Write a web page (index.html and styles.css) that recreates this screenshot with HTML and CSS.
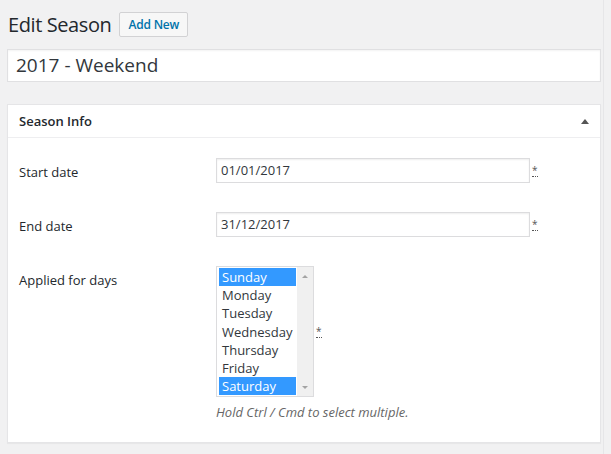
FILE: index.html
```html
<!DOCTYPE html>
<html>
<head>
<meta charset="utf-8">
<link rel="stylesheet" href="styles.css">
</head>
<body>
<div class="wrap">
  <div class="head">
    <h1 class="title">Edit Season</h1>
    <a class="add-new">Add New</a>
  </div>
  <div class="title-input">2017 - Weekend</div>
  <div class="postbox">
    <div class="postbox-head">
      <span class="postbox-title">Season Info</span>
      <span class="toggle"></span>
    </div>
    <div class="postbox-body">
      <div class="row">
        <div class="label">Start date</div>
        <div class="field">
          <div class="text-input">01/01/2017</div>
          <abbr class="req" title="required">*</abbr>
        </div>
      </div>
      <div class="row">
        <div class="label">End date</div>
        <div class="field">
          <div class="text-input">31/12/2017</div>
          <abbr class="req" title="required">*</abbr>
        </div>
      </div>
      <div class="row">
        <div class="label">Applied for days</div>
        <div class="field-col">
          <div class="field">
            <div class="listbox">
              <div class="options">
                <div class="option selected">Sunday</div>
                <div class="option">Monday</div>
                <div class="option">Tuesday</div>
                <div class="option">Wednesday</div>
                <div class="option">Thursday</div>
                <div class="option">Friday</div>
                <div class="option selected">Saturday</div>
              </div>
              <div class="scrollbar">
                <span class="arrow up"></span>
                <span class="arrow down"></span>
              </div>
            </div>
            <abbr class="req" title="required">*</abbr>
          </div>
          <div class="help">Hold Ctrl / Cmd to select multiple.</div>
        </div>
      </div>
    </div>
  </div>
</div>
<div class="edge"></div>
</body>
</html>
```

FILE: styles.css
```css
html, body {
  margin: 0;
  padding: 0;
}
body {
  background: #f1f1f2;
  font-family: "Open Sans", "Noto Sans", sans-serif;
  color: #32373c;
  font-size: 13px;
  width: 611px;
  height: 454px;
  overflow: hidden;
}
.wrap {
  margin-left: 7px;
  width: 594px;
}
.head {
  display: flex;
  align-items: center;
  gap: 8px;
  padding-top: 12px;
  height: 25px;
}
.title {
  margin: 0 0 0 1px;
  font-size: 20px;
  font-weight: 400;
  color: #23282d;
  line-height: 25px;
  letter-spacing: -0.4px;
}
.add-new {
  display: block;
  height: 23px;
  line-height: 23px;
  padding: 0 8px;
  border: 1px solid #d2d2d4;
  border-radius: 2px;
  background: #f7f7f7;
  color: #0073aa;
  font-weight: 600;
  font-size: 12px;
  letter-spacing: -0.2px;
}
.title-input {
  margin-top: 12px;
  height: 31px;
  line-height: 31px;
  border: 1px solid #e0e0e2;
  background: #fff;
  font-size: 19px;
  padding-left: 8px;
  color: #32373c;
  box-shadow: inset 0 1px 2px rgba(0,0,0,.05);
}
.postbox {
  margin-top: 22px;
  background: #fff;
  border: 1px solid #e5e5e7;
  box-shadow: 0 1px 1px rgba(0,0,0,.04);
  height: 339px;
  box-sizing: border-box;
}
.postbox-head {
  height: 32px;
  border-bottom: 1px solid #eeeef0;
  display: flex;
  align-items: center;
  justify-content: space-between;
  padding: 0 11px 0 11px;
}
.postbox-title {
  font-weight: 600;
  font-size: 13px;
  color: #23282d;
}
.toggle {
  width: 0;
  height: 0;
  border-left: 4px solid transparent;
  border-right: 4px solid transparent;
  border-bottom: 5px solid #555;
  margin-right: 0;
}
.postbox-body {
  padding: 20px 0 0 11px;
  display: flex;
  flex-direction: column;
  gap: 29px;
}
.row {
  display: grid;
  grid-template-columns: 197px 1fr;
}
.label {
  padding-top: 5px;
  line-height: 18px;
  font-size: 13px;
  color: #23282d;
}
.field {
  display: flex;
  align-items: center;
}
.field-col {
  display: flex;
  flex-direction: column;
}
.text-input {
  width: 304px;
  height: 23px;
  line-height: 23px;
  border: 1px solid #dcdcde;
  padding: 0 4px;
  box-shadow: inset 0 1px 2px rgba(0,0,0,.07);
  font-size: 13px;
  color: #32373c;
}
.req {
  font-size: 10px;
  line-height: 10px;
  color: #555;
  margin-left: 2px;
  text-decoration: none;
  border-bottom: 1px dotted #555;
  padding-bottom: 1px;
}
.listbox {
  width: 96px;
  height: 129px;
  border: 1px solid #dcdcde;
  display: flex;
  background: #fff;
}
.options {
  width: 77px;
  padding: 1px 0 0 2px;
}
.option {
  height: 18.2px;
  line-height: 18px;
  padding-left: 3px;
  font-size: 13px;
  color: #32373c;
  white-space: nowrap;
}
.option.selected {
  background: #3399ff;
  color: #fff;
}
.scrollbar {
  margin-left: 1px;
  width: 16px;
  background: #f0f0f0;
  position: relative;
}
.arrow {
  position: absolute;
  left: 5px;
  width: 0;
  height: 0;
  border-left: 3px solid transparent;
  border-right: 3px solid transparent;
}
.arrow.up {
  top: 8px;
  border-bottom: 3px solid #a3a3a3;
}
.arrow.down {
  bottom: 7px;
  border-top: 3px solid #a3a3a3;
}
.help {
  margin-top: 7px;
  font-style: italic;
  font-size: 13px;
  line-height: 16px;
  color: #666;
}
.edge {
  position: absolute;
  top: 0;
  left: 603px;
  width: 1px;
  height: 454px;
  background: #e6e6e8;
}
```
